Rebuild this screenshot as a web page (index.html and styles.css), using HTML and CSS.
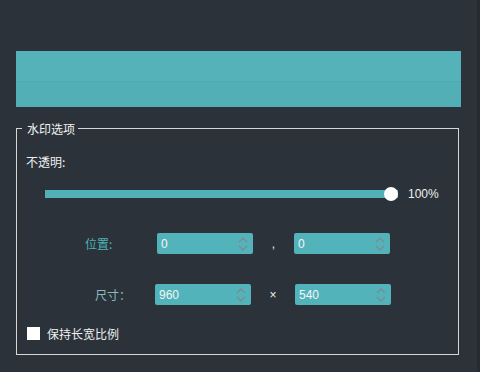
FILE: index.html
```html
<!DOCTYPE html>
<html lang="zh-CN">

<head>
  <meta charset="UTF-8">
  <title>水印选项</title>
  <link rel="stylesheet" href="styles.css">
</head>

<body>
  <div class="main">
    <div class="preview"></div>

    <fieldset class="options">
      <legend>水印选项</legend>

      <div class="opacity-label">不透明:</div>

      <div class="slider-row">
        <div class="track">
          <span class="handle"></span>
        </div>
        <span class="percent">100%</span>
      </div>

      <div class="field-row pos-row">
        <span class="field-label">位置:</span>
        <div class="spin"><span class="spin-value">0</span><span class="arrows"><svg width="12" height="16" viewBox="0 0 12 16"><path d="M2 6 L6 2 L10 6 M2 10 L6 14 L10 10" fill="none" stroke="#7d8b93" stroke-width="1.4"/></svg></span></div>
        <span class="sep">,</span>
        <div class="spin"><span class="spin-value">0</span><span class="arrows"><svg width="12" height="16" viewBox="0 0 12 16"><path d="M2 6 L6 2 L10 6 M2 10 L6 14 L10 10" fill="none" stroke="#7d8b93" stroke-width="1.4"/></svg></span></div>
      </div>

      <div class="field-row size-row">
        <span class="field-label">尺寸：</span>
        <div class="spin"><span class="spin-value">960</span><span class="arrows"><svg width="12" height="16" viewBox="0 0 12 16"><path d="M2 6 L6 2 L10 6 M2 10 L6 14 L10 10" fill="none" stroke="#7d8b93" stroke-width="1.4"/></svg></span></div>
        <span class="sep">×</span>
        <div class="spin"><span class="spin-value">540</span><span class="arrows"><svg width="12" height="16" viewBox="0 0 12 16"><path d="M2 6 L6 2 L10 6 M2 10 L6 14 L10 10" fill="none" stroke="#7d8b93" stroke-width="1.4"/></svg></span></div>
      </div>

      <label class="keep-ratio">
        <span class="box"></span>
        <span>保持长宽比例</span>
      </label>
    </fieldset>
  </div>
  <div class="edge"></div>
</body>

</html>
```

FILE: styles.css
```css
body {
  margin: 0;
  width: 480px;
  height: 372px;
  display: flex;
  overflow: hidden;
  background-color: #2b323a;
  color: #eef0f0;
  font-family: "Liberation Sans", "Noto Sans CJK SC", sans-serif;
  font-size: 12px;
}

.main {
  width: 477px;
  padding: 51px 0 0 16px;
  box-sizing: border-box;
}

.edge {
  width: 3px;
  background-color: #252b31;
}

.preview {
  width: 445px;
  height: 56px;
  background: linear-gradient(#54b2b8 0, #54b2b8 30px, #4faab0 30px, #4faab0 31px, #52afb5 31px);
}

.options {
  width: 443px;
  height: 235px;
  box-sizing: border-box;
  margin: 13px 0 0 0;
  padding: 0;
  border: 1px solid #d6d6d6;
  font-family: "Noto Sans CJK SC", sans-serif;
}

.options legend {
  margin-left: 5px;
  padding: 0 3px 0 5px;
  line-height: 17px;
  color: #f2f2f2;
}

.opacity-label {
  margin: 16px 0 0 9px;
  line-height: 17px;
}

.slider-row {
  display: flex;
  align-items: center;
  height: 14px;
  margin: 17px 0 0 28px;
}

.track {
  position: relative;
  width: 353px;
  height: 8px;
  background-color: #52b1b8;
}

.handle {
  position: absolute;
  left: 339px;
  top: -3px;
  width: 14px;
  height: 14px;
  border-radius: 50%;
  background-color: #ffffff;
}

.percent {
  margin-left: 10px;
  font-family: "Liberation Sans", sans-serif;
}

.field-row {
  display: flex;
  align-items: center;
  height: 21px;
}

.pos-row {
  margin: 32px 0 0 68px;
}

.size-row {
  margin: 30px 0 0 78px;
}

.field-label {
  color: #4fb2b9;
}

.pos-row .field-label {
  width: 72px;
}

.size-row .field-label {
  width: 60px;
  color: #8ab9bd;
}

.spin {
  width: 96px;
  height: 21px;
  display: flex;
  align-items: center;
  justify-content: space-between;
  border-radius: 2px;
  background-color: #52b3ba;
}

.spin-value {
  padding-left: 4px;
  font-family: "Liberation Sans", sans-serif;
  color: #f2f6f6;
}

.arrows {
  display: flex;
  margin-right: 4px;
}

.sep {
  text-align: center;
  font-family: "Liberation Sans", sans-serif;
}

.pos-row .sep {
  width: 41px;
}

.size-row .sep {
  width: 44px;
}

.keep-ratio {
  display: flex;
  align-items: center;
  gap: 7px;
  height: 15px;
  margin: 21px 0 0 10px;
}

.box {
  width: 13px;
  height: 13px;
  background-color: #ffffff;
}
```
